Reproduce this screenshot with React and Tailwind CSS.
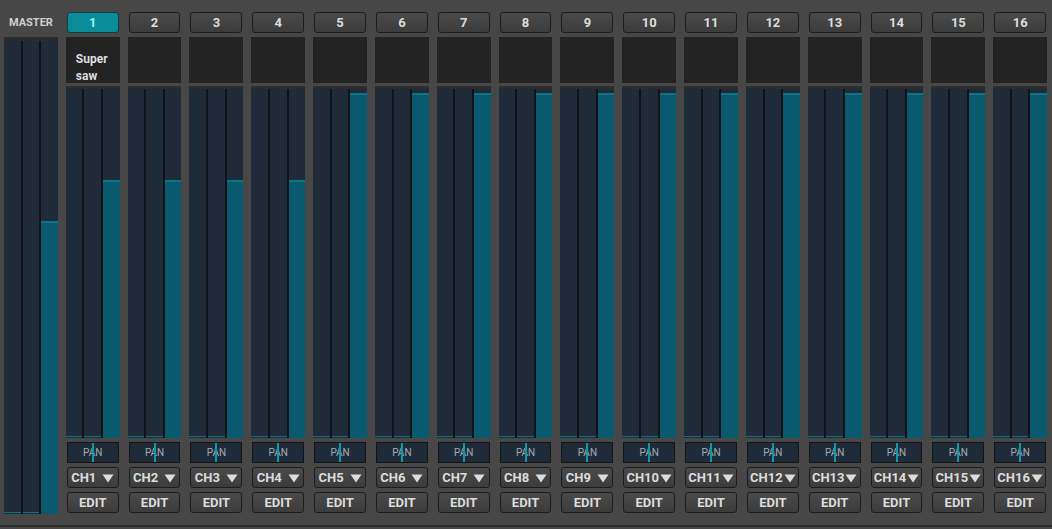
const channels = Array.from({ length: 16 }, (_, i) => ({
  num: i + 1,
  name: i === 0 ? "Super saw" : "",
  level: i < 4 ? 74 : 99,
}));

function Meter({ level }) {
  return (
    <div className="flex-1 flex gap-[2px] bg-[#0f1216]">
      {[0, 1].map((k) => (
        <div key={k} className="flex-1 flex flex-col justify-end bg-[#1f2b38]">
          <div className="h-[1px] bg-[#0c7183] mb-[1px]" />
        </div>
      ))}
      <div className="flex-1 flex flex-col justify-end bg-[#1f2b38]">
        <div className="bg-[#0a5a6f] border-t-2 border-[#0d7385]" style={{ height: `${level}%` }} />
      </div>
    </div>
  );
}

function Btn({ children, active }) {
  return (
    <div
      className={`mx-[1px] h-[21px] flex items-center justify-center rounded-[3px] border text-[13px] font-bold ${
        active
          ? "bg-[#0a8b98] border-[#0a3d44] text-[#9ff3f8]"
          : "bg-gradient-to-b from-[#4a4a4a] to-[#3c3c3c] border-[#1c1c1c] text-[#dcdcdc]"
      }`}
    >
      {children}
    </div>
  );
}

function Arrow() {
  return (
    <svg width="12" height="9" viewBox="0 0 12 9" className="mt-[1px]">
      <path d="M0.5 0.5 H11.5 L6 8.5 Z" fill="#dcdcdc" />
    </svg>
  );
}

export default function App() {
  return (
    <div className="w-[1052px] h-[529px] bg-[#474747] pb-[2px]">
      <div
        className="h-full border-b-[2px] border-[#2e2e2e] flex gap-2 pl-[4px] pr-[5px] pt-3"
        style={{ fontFamily: "Roboto, 'Liberation Sans', sans-serif" }}
      >
        {/* Master */}
        <div className="flex-1 flex flex-col">
          <div className="h-[22px] flex items-center justify-center text-[11px] font-bold text-[#d0d0d0]">
            MASTER
          </div>
          <div className="mt-[3px] h-[477px] flex flex-col">
            <div className="h-[4px] bg-[#2c2c2c]" />
            <Meter level={62} />
          </div>
        </div>

        {/* Channels */}
        {channels.map((ch) => (
          <div key={ch.num} className="flex-1 flex flex-col">
            <Btn active={ch.num === 1}>{ch.num}</Btn>
            <div className="mt-[4px] h-[46px] bg-[#232323] pl-[10px] pt-[14px] text-[12px] font-bold leading-[17px] text-[#dedede]">
              {ch.name && (
                <>
                  Super
                  <br />
                  saw
                </>
              )}
            </div>
            <div className="mt-[3px] h-[352px] flex flex-col">
              <div className="h-[3px] bg-[#2c2c2c]" />
              <Meter level={ch.level} />
            </div>
            <div className="mt-[4px] mx-[1px] h-[21px] relative bg-[#1f2b38] border border-[#141414] flex items-center justify-center text-[10px] text-[#a3abb3]">
              PAN
              <div className="absolute top-0 bottom-0 left-1/2 -ml-[1px] w-[2px] bg-[#0a9aab]" />
            </div>
            <div className="mt-[4px]">
              <Btn>
                <span className={`flex items-center ${ch.num < 10 ? "gap-[6px]" : "gap-[1px]"}`}>
                  CH{ch.num}
                  <Arrow />
                </span>
              </Btn>
            </div>
            <div className="mt-[4px]">
              <Btn>EDIT</Btn>
            </div>
          </div>
        ))}
      </div>
    </div>
  );
}
